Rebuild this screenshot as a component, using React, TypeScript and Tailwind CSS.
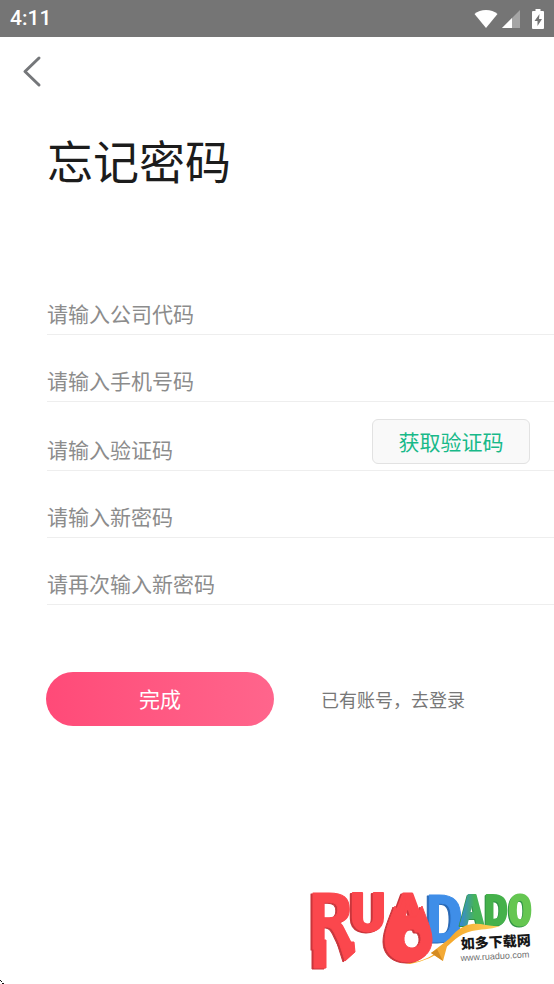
export function ForgotPassword() {
  return (
    <div className="flex min-h-screen flex-col bg-white font-['Noto_Sans_CJK_SC',sans-serif]">
      <header className="flex h-[37px] items-center justify-between bg-[#757575] px-2.5 text-white">
        <span className="font-[Roboto,sans-serif] text-[21px] font-medium">4:11</span>
        <div className="flex items-center">
          <WifiIcon className="mr-1" />
          <SignalIcon className="mr-3" />
          <BatteryIcon />
        </div>
      </header>
      <nav className="h-[70px] pt-4 pl-5">
        <button type="button" aria-label="返回" className="block">
          <BackIcon />
        </button>
      </nav>
      <main>
        <h1 className="pt-[18px] pl-[47px] text-[46px] leading-[68px] text-[#1c1c1c]">忘记密码</h1>
        <form className="mt-[75px]">
          <div className="ml-[47px]">
            <div className="flex h-[67px] items-end border-b border-[#eeeeee]">
              <input
                type="text"
                aria-label="公司代码"
                placeholder="请输入公司代码"
                className="h-[42px] w-full text-[21px] placeholder-[#8c8c8c] outline-none"
              />
            </div>
            <div className="flex h-[67px] items-end border-b border-[#eeeeee]">
              <input
                type="tel"
                aria-label="手机号码"
                placeholder="请输入手机号码"
                className="h-[42px] w-full text-[21px] placeholder-[#8c8c8c] outline-none"
              />
            </div>
            <div className="flex h-[69px] items-end border-b border-[#eeeeee]">
              <input
                type="text"
                aria-label="验证码"
                placeholder="请输入验证码"
                className="h-[42px] min-w-0 flex-1 text-[21px] placeholder-[#8c8c8c] outline-none"
              />
              <button
                type="button"
                className="mr-6 mb-1.5 h-[45px] w-[158px] rounded-md border border-[#e2e2e2] bg-[#f9f9f9] text-[21px] text-[#18b989]"
              >
                获取验证码
              </button>
            </div>
            <div className="flex h-[67px] items-end border-b border-[#eeeeee]">
              <input
                type="password"
                aria-label="新密码"
                placeholder="请输入新密码"
                className="h-[42px] w-full text-[21px] placeholder-[#8c8c8c] outline-none"
              />
            </div>
            <div className="flex h-[67px] items-end border-b border-[#eeeeee]">
              <input
                type="password"
                aria-label="再次输入新密码"
                placeholder="请再次输入新密码"
                className="h-[42px] w-full text-[21px] placeholder-[#8c8c8c] outline-none"
              />
            </div>
          </div>
          <div className="mt-[67px] flex items-center pl-[46px]">
            <button
              type="submit"
              className="h-[54px] w-[228px] rounded-full bg-linear-to-r from-[#ff4a78] to-[#ff658c] text-[21px] text-white"
            >
              完成
            </button>
            <a href="#login" className="ml-[47px] text-[18px] text-[#777777]">
              已有账号，去登录
            </a>
          </div>
        </form>
      </main>
      <footer className="mt-auto flex items-end justify-between">
        <svg width="4" height="4" viewBox="0 0 4 4" fill="#111111">
          <path d="M0 0h1v1H0zM1 1h1v1H1zM2 3h2v1H2z" />
        </svg>
        <SiteLogo className="mr-2.5 mb-2" />
      </footer>
    </div>
  );
}

function WifiIcon(props: React.SVGProps<SVGSVGElement>) {
  return (
    <svg {...props} width="24" height="20" viewBox="0 0 24 20" fill="currentColor">
      <path d="M12 19 .5 5C3.500 2.500 7.500 1 12 1s8.500 1.500 11.500 4Z" />
    </svg>
  );
}

function SignalIcon(props: React.SVGProps<SVGSVGElement>) {
  return (
    <svg {...props} width="18" height="18" viewBox="0 0 18 18" fill="currentColor">
      <path d="M18 0v18H0Z" opacity="0.35" />
      <path d="M10 8v10H0Z" />
    </svg>
  );
}

function BatteryIcon(props: React.SVGProps<SVGSVGElement>) {
  return (
    <svg {...props} width="12" height="20" viewBox="0 0 12 20">
      <path
        d="M3.500 0h5v2H11a1 1 0 0 1 1 1v16a1 1 0 0 1-1 1H1a1 1 0 0 1-1-1V3a1 1 0 0 1 1-1h2.500Z"
        fill="currentColor"
      />
      <path d="M7.500 5 2.500 12h3v5l4.500-7H7Z" fill="#757575" />
    </svg>
  );
}

function BackIcon(props: React.SVGProps<SVGSVGElement>) {
  return (
    <svg
      {...props}
      width="24"
      height="36"
      viewBox="0 0 24 36"
      fill="none"
      stroke="#75777a"
      strokeWidth="3"
      strokeLinecap="round"
      strokeLinejoin="round"
    >
      <path d="M19 5 5 18.500 19 32" />
    </svg>
  );
}

function SiteLogo(props: React.SVGProps<SVGSVGElement>) {
  return (
    <svg {...props} width="236" height="112" viewBox="308 864 236 112">
      <defs>
        <linearGradient id="leaf" x1="0" x2="1">
          <stop offset="0" stopColor="#3787d8" />
          <stop offset="0.6" stopColor="#46b35a" />
        </linearGradient>
        <linearGradient id="ribbon" x1="0" x2="1">
          <stop offset="0" stopColor="#ffb52c" />
          <stop offset="0.5" stopColor="#f5a92e" />
          <stop offset="1" stopColor="#ffd25b" />
        </linearGradient>
      </defs>
      <g
        className="font-['DejaVu_Sans_Mono',monospace] font-bold"
        strokeLinejoin="round"
      >
        <g className="drop-shadow-[-2px_1px_0_#2868b5]" fill="#3f8ee8" stroke="#3f8ee8">
          <text x="425" y="942" fontSize="64" strokeWidth="1">D</text>
        </g>
        <g className="drop-shadow-[-1px_1px_0_#2f9445]">
          <text x="460" y="925" fontSize="40" strokeWidth="2" fill="url(#leaf)" stroke="url(#leaf)">A</text>
          <text x="484" y="925" fontSize="40" strokeWidth="2" fill="#45b14b" stroke="#45b14b">D</text>
          <text x="508" y="925" fontSize="40" strokeWidth="2" fill="#65c651" stroke="#65c651">O</text>
        </g>
        {/* ribbon under the letters */}
        <path
          d="M405 963c20-1 30-8 38-17 9-10 15-20 29-22 10-1 18 3 28 2-10 4-20 3-28 5-14 3-20 12-29 19-8 6-18 11-33 14Z"
          fill="url(#ribbon)"
        />
        <path d="m431 953 18-14-6 22Z" fill="#f4aa35" />
        <path d="m431 953 6-4 6 12Z" fill="#d58b20" />
        <g className="drop-shadow-[-2px_1px_0_#c9363c]" fill="#fb474d" stroke="#fb474d">
          <path d="M314 940h12v28h-12Z" strokeWidth="1" />
          <path d="M339 942h15l1 10-10 9Z" strokeWidth="1" />
          <text x="308" y="949" fontSize="77" strokeWidth="1">R</text>
          <text x="350" y="931" fontSize="54" strokeWidth="2" className="font-[Roboto,sans-serif] font-black">
            U
          </text>
          <text x="390" y="931" fontSize="52" strokeWidth="3" className="font-[Roboto,sans-serif] font-black">
            A
          </text>
          <path
            d="M395 906c-6 16-10 25-10 35 0 13 10 21 23 21s24-9 24-22c0-10-5-20-10-34l-6 11h-15Zm17 23c6 0 9 5 9 10s-4 9-9 9-8-4-8-9 3-10 8-10Z"
            fillRule="evenodd"
            strokeWidth="1"
          />
        </g>
      </g>
      <g transform="rotate(-3 461 949)">
        <text x="461" y="949" fontSize="14" fill="#171717" className="font-['Noto_Sans_CJK_SC',sans-serif] font-black">
          如多下载网
        </text>
        <text x="460" y="961" fontSize="9" fill="#6f6f6f" className="font-['Liberation_Sans',sans-serif]">
          www.ruaduo.com
        </text>
      </g>
    </svg>
  );
}

export default ForgotPassword;
